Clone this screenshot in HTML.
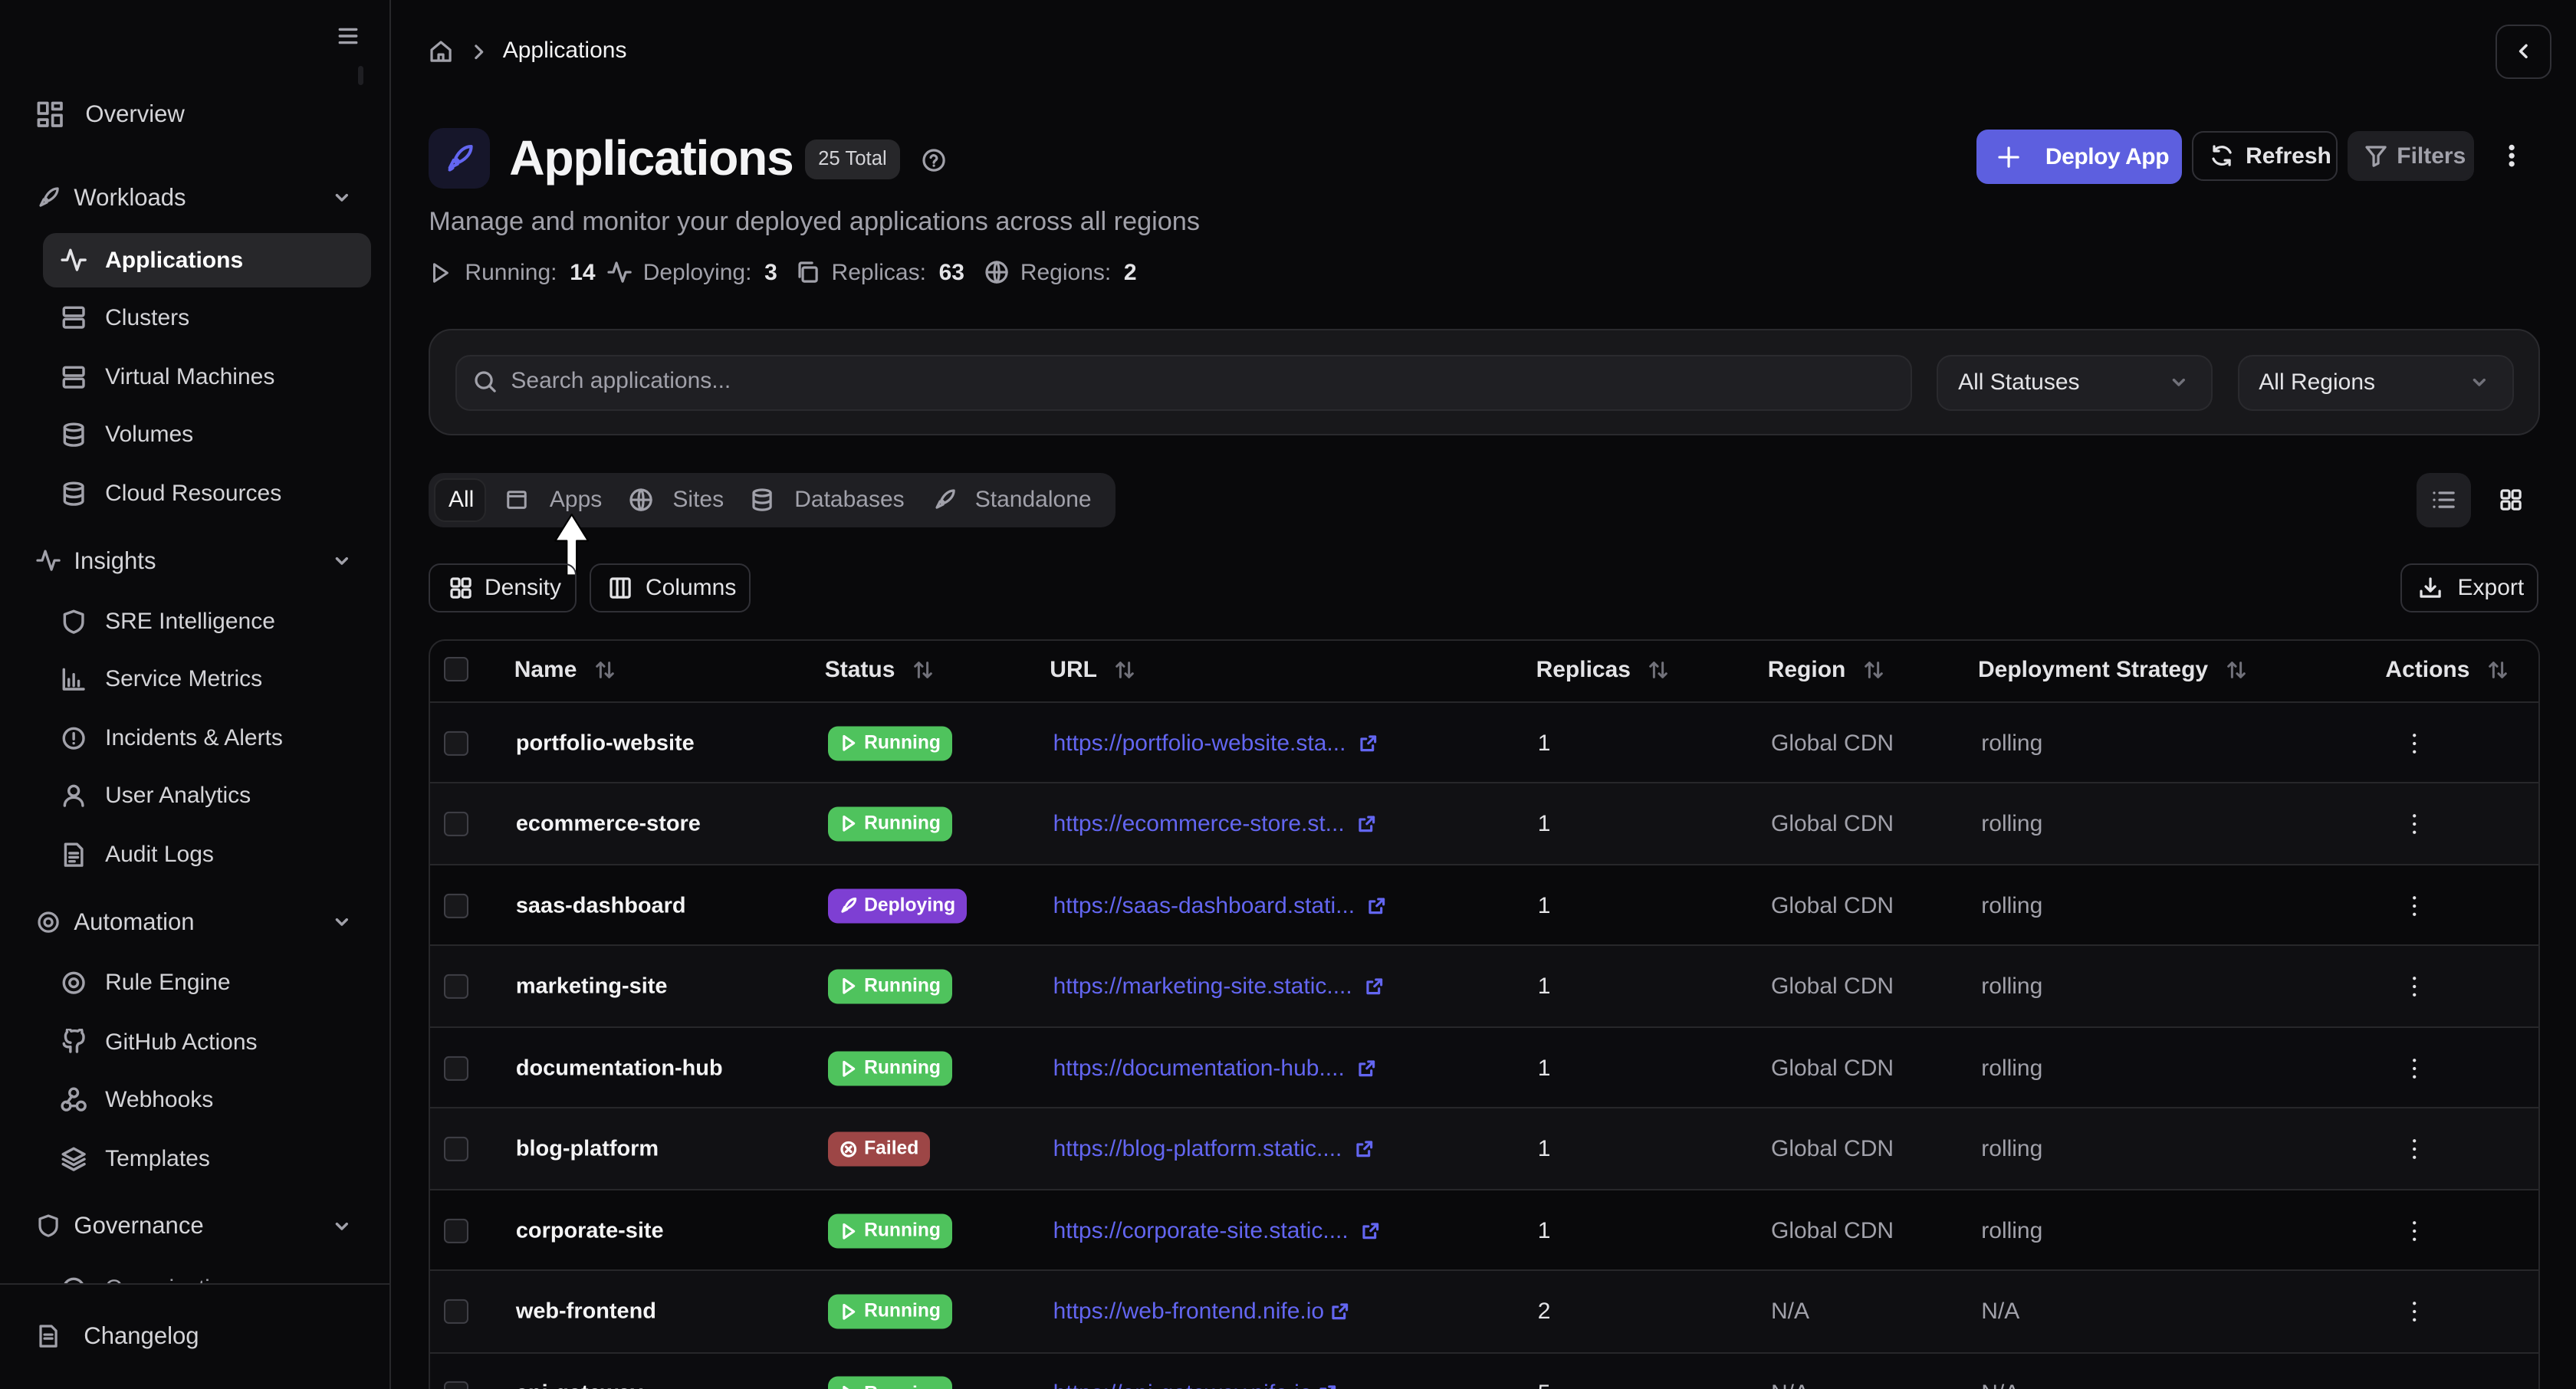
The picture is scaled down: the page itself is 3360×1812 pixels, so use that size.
<!DOCTYPE html>
<html><head><meta charset="utf-8"><style>
html{zoom:2.142857;overflow:hidden}
*{box-sizing:border-box;margin:0;padding:0}
body{width:1568px;height:845px;overflow:hidden;background:#09090b;font-family:"Liberation Sans",sans-serif;color:#e4e4e7;position:relative}
.a{position:absolute}
svg{fill:none;stroke:#a1a1aa;stroke-width:1.6;stroke-linecap:round;stroke-linejoin:round}
.side{left:0;top:0;width:238px;height:846px;border-right:1px solid #27272a;background:#0a0a0c;overflow:hidden}
.ni{position:absolute;left:26px;width:200px;height:33px;display:flex;align-items:center;font-size:14px;color:#d4d4d8}
.ni svg{width:16px;height:16px;margin:0 11px 0 11px}
.sec{position:absolute;left:22px;width:194px;display:flex;align-items:center;font-size:14.5px;color:#d4d4d8}
.sec svg.i{width:15px;height:15px;margin-right:8px}
.sec .ch{position:absolute;right:2px;width:12px;height:12px}
.btn{position:absolute;height:30px;border:1px solid #303036;border-radius:7px;display:flex;align-items:center;font-size:14px;color:#e4e4e7;font-weight:bold;white-space:nowrap}
.btn svg{width:15px;height:15px}
.row{position:absolute;left:262px;width:1283px;height:50px;border-top:1px solid #27272a;font-size:14px}
.row>*{position:absolute;top:50%;transform:translateY(-50%)}
.cb{left:8px;width:15px;height:15px;border:1px solid #3f3f46;border-radius:3px;background:#18181b}
.nm{left:52px;color:#f4f4f5;font-weight:bold;font-size:13.5px}
.bd{left:242px;height:21px;border-radius:6px;color:#fff;font-size:11.5px;font-weight:bold;display:flex;align-items:center;padding:0 7px 0 7px;white-space:nowrap}
.bd svg{width:11px;height:11px;stroke:#fff;margin-right:4px}
.run{background:#4fc35d}.dep{background:#7e3fd3}.fail{background:#9d4646}
.url{left:379px;color:#6366f1;display:flex;align-items:center;white-space:nowrap}
.url svg{width:11px;height:11px;stroke:#6366f1;margin-left:8px}
.rep{left:674px;color:#e4e4e7}
.reg{left:816px;color:#a1a1aa}
.st{left:944px;color:#a1a1aa}
.act{left:1206px;width:3px;height:14px}
.th{position:absolute;top:400px;font-size:14px;font-weight:bold;color:#e4e4e7;display:flex;align-items:center;white-space:nowrap}
.th svg{width:14px;height:14px;margin-left:10px;stroke:#71717a}
</style></head><body>
<div class="a side">
 <svg class="a" style="left:205px;top:15px;width:14px;height:14px" viewBox="0 0 14 14"><path d="M2 3h10M2 7h10M2 11h10"/></svg>
 <div class="a" style="left:218px;top:40px;width:3px;height:12px;background:#1f1f23;border-radius:2px"></div>
 <div class="sec" style="top:61px"><svg class="i" style="width:17px;height:17px;margin-right:13px" viewBox="0 0 16 16"><rect x="1.5" y="1.5" width="5" height="6"/><rect x="9.5" y="1.5" width="5" height="3.5"/><rect x="9.5" y="8.5" width="5" height="6"/><rect x="1.5" y="11" width="5" height="3.5"/></svg>Overview</div>
 <div class="sec" style="top:112px"><svg class="i" viewBox="0 0 16 16"><path d="M3 13l2-4 2 2-4 2zM6 8c2-4 5-6 8-6 0 3-2 6-6 8z"/></svg>Workloads<svg class="ch" viewBox="0 0 12 12"><path d="M3 4.5l3 3 3-3"/></svg></div>
 <div class="ni" style="top:142px;background:#27272a;border-radius:8px;color:#fff;font-weight:bold"><svg viewBox="0 0 16 16" style="stroke:#e4e4e7"><path d="M1 8h3l2-6 4 12 2-6h3"/></svg>Applications</div>
 <div class="ni" style="top:177px"><svg viewBox="0 0 16 16"><rect x="2" y="2" width="12" height="5" rx="1"/><rect x="2" y="9" width="12" height="5" rx="1"/></svg>Clusters</div>
 <div class="ni" style="top:213px"><svg viewBox="0 0 16 16"><rect x="2" y="2" width="12" height="5" rx="1"/><rect x="2" y="9" width="12" height="5" rx="1"/></svg>Virtual Machines</div>
 <div class="ni" style="top:248px"><svg viewBox="0 0 16 16"><ellipse cx="8" cy="3.5" rx="5.5" ry="2"/><path d="M2.5 3.5v9c0 1 2.5 2 5.5 2s5.5-1 5.5-2v-9M2.5 8c0 1 2.5 2 5.5 2s5.5-1 5.5-2"/></svg>Volumes</div>
 <div class="ni" style="top:284px"><svg viewBox="0 0 16 16"><ellipse cx="8" cy="3.5" rx="5.5" ry="2"/><path d="M2.5 3.5v9c0 1 2.5 2 5.5 2s5.5-1 5.5-2v-9M2.5 8c0 1 2.5 2 5.5 2s5.5-1 5.5-2"/></svg>Cloud Resources</div>
 <div class="sec" style="top:333px"><svg class="i" viewBox="0 0 16 16"><path d="M1 8h3l2-6 4 12 2-6h3"/></svg>Insights<svg class="ch" viewBox="0 0 12 12"><path d="M3 4.5l3 3 3-3"/></svg></div>
 <div class="ni" style="top:362px"><svg viewBox="0 0 16 16"><path d="M8 1.5l5.5 2v4.5c0 3.5-2.5 5.5-5.5 6.5-3-1-5.5-3-5.5-6.5V3.5z"/></svg>SRE Intelligence</div>
 <div class="ni" style="top:397px"><svg viewBox="0 0 16 16"><path d="M2 2v12h12M5 12V8M8 12V5M11 12V9"/></svg>Service Metrics</div>
 <div class="ni" style="top:433px"><svg viewBox="0 0 16 16"><circle cx="8" cy="8" r="6"/><path d="M8 5v3.5M8 11h0"/></svg>Incidents &amp; Alerts</div>
 <div class="ni" style="top:468px"><svg viewBox="0 0 16 16"><circle cx="8" cy="5" r="3"/><path d="M2.5 14c0-3 2.5-5 5.5-5s5.5 2 5.5 5"/></svg>User Analytics</div>
 <div class="ni" style="top:504px"><svg viewBox="0 0 16 16"><path d="M3 1.5h7l3 3v10H3zM5.5 7h5M5.5 9.5h5M5.5 12h3"/></svg>Audit Logs</div>
 <div class="sec" style="top:553px"><svg class="i" viewBox="0 0 16 16"><circle cx="8" cy="8" r="2.5"/><circle cx="8" cy="8" r="6"/></svg>Automation<svg class="ch" viewBox="0 0 12 12"><path d="M3 4.5l3 3 3-3"/></svg></div>
 <div class="ni" style="top:582px"><svg viewBox="0 0 16 16"><circle cx="8" cy="8" r="2.5"/><circle cx="8" cy="8" r="6"/></svg>Rule Engine</div>
 <div class="ni" style="top:618px"><svg viewBox="0 0 16 16"><path d="M6 14v-3c-3 .5-4-1-4-2M10 14v-3c0-1 .5-1.5 1-2 2-.3 3-1.5 3-4 0-1-.3-1.8-1-2.5.2-.8 0-1.5-.2-2-1 0-1.8.5-2.3 1a8 8 0 00-4 0C6 .5 5.2 0 4.2 0 4 .5 3.8 1.2 4 2c-.7.7-1 1.5-1 2.5 0 2.5 1 3.7 3 4"/></svg>GitHub Actions</div>
 <div class="ni" style="top:653px"><svg viewBox="0 0 16 16"><circle cx="8" cy="4" r="2.5"/><circle cx="3.5" cy="12" r="2.5"/><circle cx="12.5" cy="12" r="2.5"/><path d="M7 6l-3 4M6 12h4"/></svg>Webhooks</div>
 <div class="ni" style="top:689px"><svg viewBox="0 0 16 16"><path d="M8 1.5l6.5 3.5L8 8.5 1.5 5zM1.5 8L8 11.5 14.5 8M1.5 11L8 14.5 14.5 11"/></svg>Templates</div>
 <div class="sec" style="top:738px"><svg class="i" viewBox="0 0 16 16"><path d="M8 1.5l5.5 2v4.5c0 3.5-2.5 5.5-5.5 6.5-3-1-5.5-3-5.5-6.5V3.5z"/></svg>Governance<svg class="ch" viewBox="0 0 12 12"><path d="M3 4.5l3 3 3-3"/></svg></div>
 <div class="ni" style="top:768px;color:#a1a1aa"><svg viewBox="0 0 16 16"><circle cx="8" cy="8" r="6"/></svg>Organization</div>
 <div class="a" style="left:0;top:781px;width:238px;height:65px;border-top:1px solid #27272a;background:#0a0a0c"></div>
 <div class="sec" style="top:805px"><svg class="i" style="margin-right:14px" viewBox="0 0 16 16"><path d="M3 1.5h7l3 3v10H3zM5.5 7h5M5.5 9.5h5"/></svg>Changelog</div>
</div>

<svg class="a" style="left:261px;top:24px;width:15px;height:15px" viewBox="0 0 16 16"><path d="M2 7l6-5 6 5v7H2zM6.5 14v-4h3v4"/></svg>
<svg class="a" style="left:286px;top:26px;width:11px;height:11px" viewBox="0 0 12 12"><path d="M4 2l4 4-4 4"/></svg>
<div class="a" style="left:306px;top:23px;font-size:14px;color:#f4f4f5">Applications</div>
<div class="a" style="left:1519px;top:15px;width:34px;height:33px;border:1px solid #303036;border-radius:8px"></div>
<svg class="a" style="left:1530px;top:25px;width:12px;height:12px" viewBox="0 0 12 12"><path d="M7.5 2.5L4 6l3.5 3.5" style="stroke:#e4e4e7"/></svg>

<div class="a" style="left:261px;top:78px;width:37px;height:37px;background:#16162a;border-radius:9px"></div>
<svg class="a" style="left:270px;top:87px;width:19px;height:19px" viewBox="0 0 16 16"><path style="stroke:#6366f1" d="M3 13l2-4 2 2-4 2zM6 8c2-4 5-6 8-6 0 3-2 6-6 8zM4 12.5c-.5.5-1 1.5-1 1.5s1-.5 1.5-1"/></svg>
<div class="a" style="left:310px;top:79px;font-size:30px;font-weight:bold;color:#f4f4f5;letter-spacing:-0.6px">Applications</div>
<div class="a" style="left:490px;top:85px;height:24px;padding:0 8px;background:#27272a;border-radius:7px;font-size:12px;line-height:24px;color:#d4d4d8">25 Total</div>
<svg class="a" style="left:561px;top:90px;width:15px;height:15px" viewBox="0 0 16 16"><circle cx="8" cy="8" r="6.5"/><path d="M6 6.2a2 2 0 013.9.5c0 1.3-1.9 1.6-1.9 2.8M8 11.5h0"/></svg>
<div class="a" style="left:261px;top:126px;font-size:16px;color:#a1a1aa">Manage and monitor your deployed applications across all regions</div>
<div class="a" style="left:261px;top:158px;font-size:14px;color:#a1a1aa;display:flex;align-items:center;white-space:pre">
<svg style="width:14px;height:14px;margin-right:8px" viewBox="0 0 16 16"><path d="M4 2l9 6-9 6z"/></svg>Running:  <b style="color:#e4e4e7">14</b>
<svg style="width:15px;height:15px;margin:0 7px 0 7px" viewBox="0 0 16 16"><path d="M1 8h3l2-6 4 12 2-6h3"/></svg>Deploying:  <b style="color:#e4e4e7">3</b>
<svg style="width:15px;height:15px;margin:0 7px 0 11px" viewBox="0 0 16 16"><rect x="5" y="5" width="9" height="9" rx="1"/><path d="M3 11V3a1 1 0 011-1h7"/></svg>Replicas:  <b style="color:#e4e4e7">63</b>
<svg style="width:15px;height:15px;margin:0 7px 0 12px" viewBox="0 0 16 16"><circle cx="8" cy="8" r="6.5"/><path d="M1.5 8h13M8 1.5c2 2 2 11 0 13M8 1.5c-2 2-2 11 0 13"/></svg>Regions:  <b style="color:#e4e4e7">2</b></div>

<div class="btn" style="left:1203px;top:79px;height:33px;width:125px;background:#5d5fdf;border:none;color:#fff;justify-content:flex-start;padding-left:12px;letter-spacing:-0.2px"><svg viewBox="0 0 16 16" style="stroke:#fff"><path d="M8 2v12M2 8h12"/></svg><span style="margin-left:15px">Deploy App</span></div>
<div class="btn" style="left:1334px;top:80px;width:89px;padding-left:10px"><svg viewBox="0 0 16 16" style="stroke:#e4e4e7"><path d="M13.5 6A6 6 0 003 5M2.5 10a6 6 0 0010.5 1M3 2v3h3M13 14v-3h-3"/></svg><span style="margin-left:7px">Refresh</span></div>
<div class="btn" style="left:1429px;top:80px;width:77px;background:#1f1f23;border-color:#1f1f23;color:#a1a1aa;padding-left:9px"><svg viewBox="0 0 16 16"><path d="M2 2.5h12L9.5 8v5l-3 1.5V8z"/></svg><span style="margin-left:5px">Filters</span></div>
<svg class="a" style="left:1521px;top:87px;width:16px;height:16px" viewBox="0 0 16 16"><circle cx="8" cy="3" r=".9" style="fill:#e4e4e7;stroke:#e4e4e7"/><circle cx="8" cy="8" r=".9" style="fill:#e4e4e7;stroke:#e4e4e7"/><circle cx="8" cy="13" r=".9" style="fill:#e4e4e7;stroke:#e4e4e7"/></svg>

<div class="a" style="left:261px;top:200px;width:1285px;height:65px;border:1px solid #2a2a2e;background:#18181b;border-radius:14px"></div>
<div class="a" style="left:277px;top:216px;width:887px;height:34px;border:1px solid #2a2a2e;background:#1f1f23;border-radius:9px"></div>
<svg class="a" style="left:288px;top:225px;width:15px;height:15px" viewBox="0 0 16 16"><circle cx="7" cy="7" r="5"/><path d="M11 11l3 3"/></svg>
<div class="a" style="left:311px;top:224px;font-size:14px;color:#a1a1aa">Search applications...</div>
<div class="a" style="left:1179px;top:216px;width:168px;height:34px;border:1px solid #2a2a2e;background:#1f1f23;border-radius:9px;font-size:14px;color:#e4e4e7;padding:8px 0 0 12px">All Statuses</div>
<svg class="a" style="left:1320px;top:227px;width:12px;height:12px" viewBox="0 0 12 12"><path d="M3 4.5l3 3 3-3" style="stroke:#71717a"/></svg>
<div class="a" style="left:1362px;top:216px;width:168px;height:34px;border:1px solid #2a2a2e;background:#1f1f23;border-radius:9px;font-size:14px;color:#e4e4e7;padding:8px 0 0 12px">All Regions</div>
<svg class="a" style="left:1503px;top:227px;width:12px;height:12px" viewBox="0 0 12 12"><path d="M3 4.5l3 3 3-3" style="stroke:#71717a"/></svg>

<div class="a" style="left:261px;top:288px;width:418px;height:33px;background:#1f1f23;border-radius:9px"></div>
<div class="a" style="left:264px;top:291px;width:32px;height:27px;background:#18181b;border-radius:7px;border:1px solid #27272a"></div>
<div class="a" style="left:261px;top:288px;height:33px;display:flex;align-items:center;font-size:14px;color:#a1a1aa;white-space:nowrap">
<span style="margin-left:12px;color:#f4f4f5">All</span>
<svg style="width:14px;height:14px;margin-left:19px" viewBox="0 0 16 16"><rect x="2" y="2.5" width="12" height="11" rx="1"/><path d="M2 5.5h12"/></svg><span style="margin-left:13px">Apps</span>
<svg style="width:15px;height:15px;margin-left:16px" viewBox="0 0 16 16"><circle cx="8" cy="8" r="6.5"/><path d="M1.5 8h13M8 1.5c2 2 2 11 0 13M8 1.5c-2 2-2 11 0 13"/></svg><span style="margin-left:12px">Sites</span>
<svg style="width:15px;height:15px;margin-left:16px" viewBox="0 0 16 16"><ellipse cx="8" cy="3.5" rx="5.5" ry="2"/><path d="M2.5 3.5v9c0 1 2.5 2 5.5 2s5.5-1 5.5-2v-9M2.5 8c0 1 2.5 2 5.5 2s5.5-1 5.5-2"/></svg><span style="margin-left:12px">Databases</span>
<svg style="width:15px;height:15px;margin-left:17px" viewBox="0 0 16 16"><path d="M3 13l2-4 2 2-4 2zM6 8c2-4 5-6 8-6 0 3-2 6-6 8z"/></svg><span style="margin-left:11px">Standalone</span></div>
<svg class="a" style="left:336px;top:312px;width:24px;height:38px" viewBox="0 0 24 38"><path d="M12 1L2 17h7v21h6V17h7z" style="fill:#fff;stroke:#000;stroke-width:1"/></svg>
<div class="a" style="left:1471px;top:288px;width:33px;height:33px;background:#1f1f23;border-radius:8px"></div>
<svg class="a" style="left:1480px;top:297px;width:15px;height:15px" viewBox="0 0 16 16"><path d="M5.5 3.5h9M5.5 8h9M5.5 12.5h9M2 3.5h0M2 8h0M2 12.5h0"/></svg>
<svg class="a" style="left:1521px;top:297px;width:15px;height:15px" viewBox="0 0 16 16"><rect x="2" y="2" width="5" height="5" rx="1" style="stroke:#e4e4e7"/><rect x="9" y="2" width="5" height="5" rx="1" style="stroke:#e4e4e7"/><rect x="2" y="9" width="5" height="5" rx="1" style="stroke:#e4e4e7"/><rect x="9" y="9" width="5" height="5" rx="1" style="stroke:#e4e4e7"/></svg>

<div class="btn" style="left:261px;top:343px;width:90px;padding-left:11px;font-weight:normal"><svg viewBox="0 0 16 16" style="stroke:#e4e4e7"><rect x="2" y="2" width="5" height="5" rx="1"/><rect x="9" y="2" width="5" height="5" rx="1"/><rect x="2" y="9" width="5" height="5" rx="1"/><rect x="9" y="9" width="5" height="5" rx="1"/></svg><span style="margin-left:7px">Density</span></div>
<div class="btn" style="left:359px;top:343px;width:98px;padding-left:10px;font-weight:normal"><svg viewBox="0 0 16 16" style="stroke:#e4e4e7"><rect x="2" y="2" width="12" height="12" rx="1"/><path d="M6 2v12M10 2v12"/></svg><span style="margin-left:8px">Columns</span></div>
<div class="btn" style="left:1461px;top:343px;width:84px;padding-left:10px;font-weight:normal"><svg viewBox="0 0 16 16" style="stroke:#e4e4e7"><path d="M8 2v8M5 7l3 3 3-3M2 10v3.5h12V10"/></svg><span style="margin-left:9px">Export</span></div>

<div class="a" style="left:261px;top:389px;width:1285px;height:470px;border:1px solid #27272a;border-radius:10px;background:#09090b"></div>
<div class="a cb" style="left:270px;top:400px;width:15px;height:15px;border:1px solid #3f3f46;border-radius:3px;background:#18181b"></div>
<div class="th" style="left:313px">Name<svg viewBox="0 0 16 16"><path d="M5 13V3M2.5 5.5L5 3l2.5 2.5M11 3v10M8.5 10.5L11 13l2.5-2.5"/></svg></div>
<div class="th" style="left:502px">Status<svg viewBox="0 0 16 16"><path d="M5 13V3M2.5 5.5L5 3l2.5 2.5M11 3v10M8.5 10.5L11 13l2.5-2.5"/></svg></div>
<div class="th" style="left:639px">URL<svg viewBox="0 0 16 16"><path d="M5 13V3M2.5 5.5L5 3l2.5 2.5M11 3v10M8.5 10.5L11 13l2.5-2.5"/></svg></div>
<div class="th" style="left:935px">Replicas<svg viewBox="0 0 16 16"><path d="M5 13V3M2.5 5.5L5 3l2.5 2.5M11 3v10M8.5 10.5L11 13l2.5-2.5"/></svg></div>
<div class="th" style="left:1076px">Region<svg viewBox="0 0 16 16"><path d="M5 13V3M2.5 5.5L5 3l2.5 2.5M11 3v10M8.5 10.5L11 13l2.5-2.5"/></svg></div>
<div class="th" style="left:1204px">Deployment Strategy<svg viewBox="0 0 16 16"><path d="M5 13V3M2.5 5.5L5 3l2.5 2.5M11 3v10M8.5 10.5L11 13l2.5-2.5"/></svg></div>
<div class="th" style="left:1452px">Actions<svg viewBox="0 0 16 16"><path d="M5 13V3M2.5 5.5L5 3l2.5 2.5M11 3v10M8.5 10.5L11 13l2.5-2.5"/></svg></div>

<div class="row" style="top:427px;background:#0c0c0f"><div class="cb"></div><div class="nm">portfolio-website</div><div class="bd run"><svg viewBox="0 0 12 12"><path d="M3 1.5l6.5 4.5L3 10.5z"/></svg>Running</div><div class="url">https://portfolio-website.sta...<svg viewBox="0 0 12 12"><path d="M7 1.5h3.5V5M10.5 1.5L6 6M9 7.5v3H1.5V3h3"/></svg></div><div class="rep">1</div><div class="reg">Global CDN</div><div class="st">rolling</div><svg class="act" viewBox="0 0 3 14"><circle cx="1.5" cy="2" r="1" style="fill:#e4e4e7;stroke:none"/><circle cx="1.5" cy="7" r="1" style="fill:#e4e4e7;stroke:none"/><circle cx="1.5" cy="12" r="1" style="fill:#e4e4e7;stroke:none"/></svg></div>
<div class="row" style="top:476px;background:#111114"><div class="cb"></div><div class="nm">ecommerce-store</div><div class="bd run"><svg viewBox="0 0 12 12"><path d="M3 1.5l6.5 4.5L3 10.5z"/></svg>Running</div><div class="url">https://ecommerce-store.st...<svg viewBox="0 0 12 12"><path d="M7 1.5h3.5V5M10.5 1.5L6 6M9 7.5v3H1.5V3h3"/></svg></div><div class="rep">1</div><div class="reg">Global CDN</div><div class="st">rolling</div><svg class="act" viewBox="0 0 3 14"><circle cx="1.5" cy="2" r="1" style="fill:#e4e4e7;stroke:none"/><circle cx="1.5" cy="7" r="1" style="fill:#e4e4e7;stroke:none"/><circle cx="1.5" cy="12" r="1" style="fill:#e4e4e7;stroke:none"/></svg></div>
<div class="row" style="top:526px;background:#09090b"><div class="cb"></div><div class="nm">saas-dashboard</div><div class="bd dep"><svg viewBox="0 0 12 12"><path d="M2 10l1.5-3 1.5 1.5zM4.5 6c1.5-3 4-4.5 6-4.5 0 2-1.5 4.5-4.5 6"/></svg>Deploying</div><div class="url">https://saas-dashboard.stati...<svg viewBox="0 0 12 12"><path d="M7 1.5h3.5V5M10.5 1.5L6 6M9 7.5v3H1.5V3h3"/></svg></div><div class="rep">1</div><div class="reg">Global CDN</div><div class="st">rolling</div><svg class="act" viewBox="0 0 3 14"><circle cx="1.5" cy="2" r="1" style="fill:#e4e4e7;stroke:none"/><circle cx="1.5" cy="7" r="1" style="fill:#e4e4e7;stroke:none"/><circle cx="1.5" cy="12" r="1" style="fill:#e4e4e7;stroke:none"/></svg></div>
<div class="row" style="top:575px;background:#0f0f12"><div class="cb"></div><div class="nm">marketing-site</div><div class="bd run"><svg viewBox="0 0 12 12"><path d="M3 1.5l6.5 4.5L3 10.5z"/></svg>Running</div><div class="url">https://marketing-site.static....<svg viewBox="0 0 12 12"><path d="M7 1.5h3.5V5M10.5 1.5L6 6M9 7.5v3H1.5V3h3"/></svg></div><div class="rep">1</div><div class="reg">Global CDN</div><div class="st">rolling</div><svg class="act" viewBox="0 0 3 14"><circle cx="1.5" cy="2" r="1" style="fill:#e4e4e7;stroke:none"/><circle cx="1.5" cy="7" r="1" style="fill:#e4e4e7;stroke:none"/><circle cx="1.5" cy="12" r="1" style="fill:#e4e4e7;stroke:none"/></svg></div>
<div class="row" style="top:625px;background:#0c0c0f"><div class="cb"></div><div class="nm">documentation-hub</div><div class="bd run"><svg viewBox="0 0 12 12"><path d="M3 1.5l6.5 4.5L3 10.5z"/></svg>Running</div><div class="url">https://documentation-hub....<svg viewBox="0 0 12 12"><path d="M7 1.5h3.5V5M10.5 1.5L6 6M9 7.5v3H1.5V3h3"/></svg></div><div class="rep">1</div><div class="reg">Global CDN</div><div class="st">rolling</div><svg class="act" viewBox="0 0 3 14"><circle cx="1.5" cy="2" r="1" style="fill:#e4e4e7;stroke:none"/><circle cx="1.5" cy="7" r="1" style="fill:#e4e4e7;stroke:none"/><circle cx="1.5" cy="12" r="1" style="fill:#e4e4e7;stroke:none"/></svg></div>
<div class="row" style="top:674px;background:#111114"><div class="cb"></div><div class="nm">blog-platform</div><div class="bd fail"><svg viewBox="0 0 12 12"><circle cx="6" cy="6" r="4.5"/><path d="M4.3 4.3l3.4 3.4M7.7 4.3L4.3 7.7"/></svg>Failed</div><div class="url">https://blog-platform.static....<svg viewBox="0 0 12 12"><path d="M7 1.5h3.5V5M10.5 1.5L6 6M9 7.5v3H1.5V3h3"/></svg></div><div class="rep">1</div><div class="reg">Global CDN</div><div class="st">rolling</div><svg class="act" viewBox="0 0 3 14"><circle cx="1.5" cy="2" r="1" style="fill:#e4e4e7;stroke:none"/><circle cx="1.5" cy="7" r="1" style="fill:#e4e4e7;stroke:none"/><circle cx="1.5" cy="12" r="1" style="fill:#e4e4e7;stroke:none"/></svg></div>
<div class="row" style="top:724px;background:#09090b"><div class="cb"></div><div class="nm">corporate-site</div><div class="bd run"><svg viewBox="0 0 12 12"><path d="M3 1.5l6.5 4.5L3 10.5z"/></svg>Running</div><div class="url">https://corporate-site.static....<svg viewBox="0 0 12 12"><path d="M7 1.5h3.5V5M10.5 1.5L6 6M9 7.5v3H1.5V3h3"/></svg></div><div class="rep">1</div><div class="reg">Global CDN</div><div class="st">rolling</div><svg class="act" viewBox="0 0 3 14"><circle cx="1.5" cy="2" r="1" style="fill:#e4e4e7;stroke:none"/><circle cx="1.5" cy="7" r="1" style="fill:#e4e4e7;stroke:none"/><circle cx="1.5" cy="12" r="1" style="fill:#e4e4e7;stroke:none"/></svg></div>
<div class="row" style="top:773px;background:#0f0f12"><div class="cb"></div><div class="nm">web-frontend</div><div class="bd run"><svg viewBox="0 0 12 12"><path d="M3 1.5l6.5 4.5L3 10.5z"/></svg>Running</div><div class="url">https://web-frontend.nife.io<svg viewBox="0 0 12 12" style="margin-left:4px"><path d="M7 1.5h3.5V5M10.5 1.5L6 6M9 7.5v3H1.5V3h3"/></svg></div><div class="rep">2</div><div class="reg">N/A</div><div class="st">N/A</div><svg class="act" viewBox="0 0 3 14"><circle cx="1.5" cy="2" r="1" style="fill:#e4e4e7;stroke:none"/><circle cx="1.5" cy="7" r="1" style="fill:#e4e4e7;stroke:none"/><circle cx="1.5" cy="12" r="1" style="fill:#e4e4e7;stroke:none"/></svg></div>
<div class="row" style="top:823px;background:#0c0c0f"><div class="cb"></div><div class="nm">api-gateway</div><div class="bd run"><svg viewBox="0 0 12 12"><path d="M3 1.5l6.5 4.5L3 10.5z"/></svg>Running</div><div class="url">https://api-gateway.nife.io<svg viewBox="0 0 12 12" style="margin-left:4px"><path d="M7 1.5h3.5V5M10.5 1.5L6 6M9 7.5v3H1.5V3h3"/></svg></div><div class="rep">5</div><div class="reg">N/A</div><div class="st">N/A</div></div>
</body></html>
